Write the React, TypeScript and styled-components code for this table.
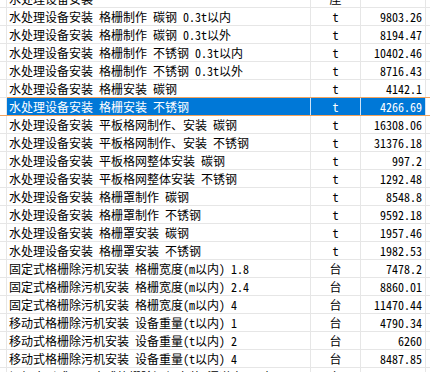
import React from "react";
import styled, { createGlobalStyle, css } from "styled-components";

const Global = createGlobalStyle`
  html, body {
    margin: 0;
    padding: 0;
    background: #ffffff;
    overflow: hidden;
  }
  body {
    font-family: "Noto Sans Mono CJK SC", "Noto Sans CJK SC", "Liberation Mono", monospace;
    font-size: 12px;
    color: #000000;
  }
`;

const Viewport = styled.div`
  width: 430px;
  height: 372px;
  overflow: hidden;
`;

const Sheet = styled.div`
  margin-top: -10px;
  display: flex;
  flex-direction: column;
`;

const Row = styled.div<{ $selected?: boolean }>`
  display: grid;
  grid-template-columns: 7px 304px 50px 65px 1fr;
  height: 18px;
  box-sizing: border-box;
  border-bottom: 1px solid ${(p) => (p.$selected ? "#f2a35e" : "#e6e6e6")};
`;

const Cell = styled.div<{ $selected?: boolean; $align?: "left" | "center" | "right" }>`
  box-sizing: border-box;
  display: flex;
  align-items: center;
  justify-content: ${(p) =>
    p.$align === "right" ? "flex-end" : p.$align === "center" ? "center" : "flex-start"};
  padding: ${(p) => (p.$align === "right" ? "0 3px 0 0" : p.$align === "center" ? "0" : "0 0 0 2px")};
  border-right: 1px solid #e6e6e6;
  white-space: nowrap;
  overflow: hidden;
  line-height: 17px;
  ${(p) =>
    p.$selected &&
    css`
      background: #0078d7;
      color: #ffffff;
      border-right-color: #cfe3f7;
      box-shadow: 0 -1px 0 #f2a35e;
    `}
`;

const Gutter = styled.div`
  border-right: 1px solid #e6e6e6;
`;

const Tail = styled.div<{ $selected?: boolean }>`
  ${(p) =>
    p.$selected &&
    css`
      box-shadow: 0 -1px 0 #f2a35e;
    `}
`;

type Item = { name: string; unit: string; price: string; selected?: boolean };

const items: Item[] = [
  { name: "水处理设备安装", unit: "座", price: "" },
  { name: "水处理设备安装 格栅制作 碳钢 0.3t以内", unit: "t", price: "9803.26" },
  { name: "水处理设备安装 格栅制作 碳钢 0.3t以外", unit: "t", price: "8194.47" },
  { name: "水处理设备安装 格栅制作 不锈钢 0.3t以内", unit: "t", price: "10402.46" },
  { name: "水处理设备安装 格栅制作 不锈钢 0.3t以外", unit: "t", price: "8716.43" },
  { name: "水处理设备安装 格栅安装 碳钢", unit: "t", price: "4142.1" },
  { name: "水处理设备安装 格栅安装 不锈钢", unit: "t", price: "4266.69", selected: true },
  { name: "水处理设备安装 平板格网制作、安装 碳钢", unit: "t", price: "16308.06" },
  { name: "水处理设备安装 平板格网制作、安装 不锈钢", unit: "t", price: "31376.18" },
  { name: "水处理设备安装 平板格网整体安装 碳钢", unit: "t", price: "997.2" },
  { name: "水处理设备安装 平板格网整体安装 不锈钢", unit: "t", price: "1292.48" },
  { name: "水处理设备安装 格栅罩制作 碳钢", unit: "t", price: "8548.8" },
  { name: "水处理设备安装 格栅罩制作 不锈钢", unit: "t", price: "9592.18" },
  { name: "水处理设备安装 格栅罩安装 碳钢", unit: "t", price: "1957.46" },
  { name: "水处理设备安装 格栅罩安装 不锈钢", unit: "t", price: "1982.53" },
  { name: "固定式格栅除污机安装 格栅宽度(m以内) 1.8", unit: "台", price: "7478.2" },
  { name: "固定式格栅除污机安装 格栅宽度(m以内) 2.4", unit: "台", price: "8860.01" },
  { name: "固定式格栅除污机安装 格栅宽度(m以内) 4", unit: "台", price: "11470.44" },
  { name: "移动式格栅除污机安装 设备重量(t以内) 1", unit: "台", price: "4790.34" },
  { name: "移动式格栅除污机安装 设备重量(t以内) 2", unit: "台", price: "6260" },
  { name: "移动式格栅除污机安装 设备重量(t以内) 4", unit: "台", price: "8487.85" },
  { name: "钢绳牵引式、双索式格栅除污机安装(渠道宽m以内) 4", unit: "台", price: "5083.07" },
];

export default function App() {
  return (
    <Viewport>
      <Global />
      <Sheet>
        {items.map((it, i) => (
          <Row key={i} $selected={it.selected}>
            <Gutter />
            <Cell $selected={it.selected}>{it.name}</Cell>
            <Cell $selected={it.selected} $align="center">
              {it.unit}
            </Cell>
            <Cell $selected={it.selected} $align="right">
              {it.price}
            </Cell>
            <Tail $selected={it.selected} />
          </Row>
        ))}
      </Sheet>
    </Viewport>
  );
}
